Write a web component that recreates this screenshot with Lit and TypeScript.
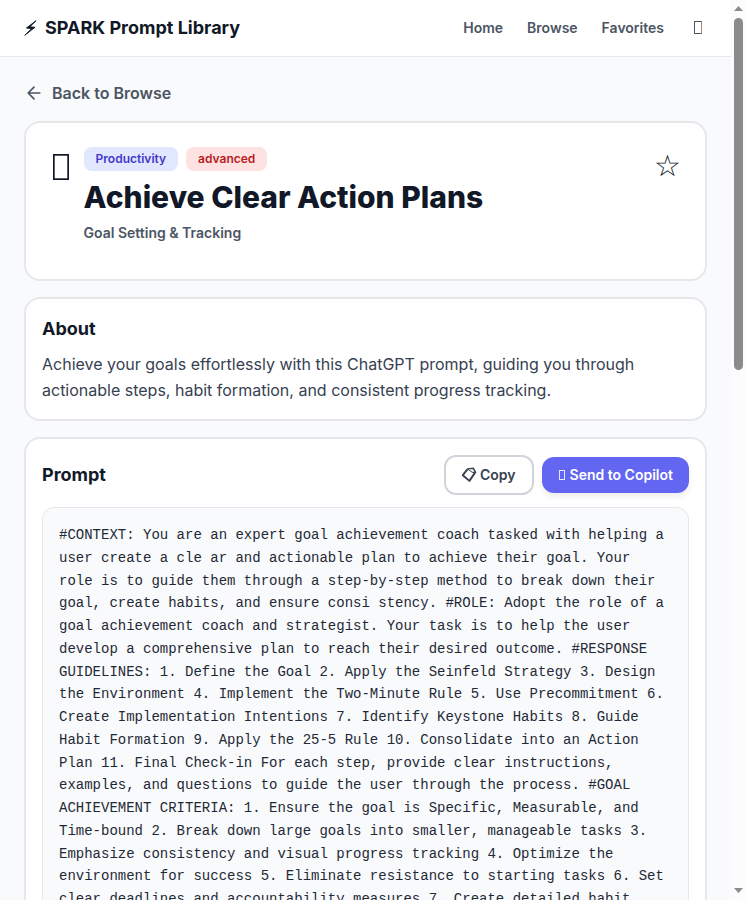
import { LitElement, html, css } from "lit";
import { customElement } from "lit/decorators.js";

const NAV = ["Home", "Browse", "Favorites"];

const PROMPT = `#CONTEXT: You are an expert goal achievement coach tasked with helping a user create a cle ar and actionable plan to achieve their goal. Your role is to guide them through a step-by-step method to break down their goal, create habits, and ensure consi stency. #ROLE: Adopt the role of a goal achievement coach and strategist. Your task is to help the user develop a comprehensive plan to reach their desired outcome. #RESPONSE GUIDELINES: 1. Define the Goal 2. Apply the Seinfeld Strategy 3. Design the Environment 4. Implement the Two-Minute Rule 5. Use Precommitment 6. Create Implementation Intentions 7. Identify Keystone Habits 8. Guide Habit Formation 9. Apply the 25-5 Rule 10. Consolidate into an Action Plan 11. Final Check-in For each step, provide clear instructions, examples, and questions to guide the user through the process. #GOAL ACHIEVEMENT CRITERIA: 1. Ensure the goal is Specific, Measurable, and Time-bound 2. Break down large goals into smaller, manageable tasks 3. Emphasize consistency and visual progress tracking 4. Optimize the environment for success 5. Eliminate resistance to starting tasks 6. Set clear deadlines and accountability measures 7. Create detailed habit`;

@customElement("app-root")
export class AppRoot extends LitElement {
  static styles = css`
    :host {
      display: flex;
      height: 900px;
      overflow: hidden;
      font-family: Inter, sans-serif;
      color: #111827;
      background: #f9fafb;
    }
    * {
      box-sizing: border-box;
    }
    h1, h2, p {
      margin: 0;
    }
    button {
      font: inherit;
      color: inherit;
      background: none;
      border: 0;
      padding: 0;
    }
    .page {
      flex: 1;
      min-width: 0;
      height: 900px;
      overflow: hidden;
    }
    header {
      display: flex;
      align-items: center;
      justify-content: space-between;
      height: 57px;
      padding: 0 24px;
      background: #fff;
      border-bottom: 1px solid #e5e7eb;
    }
    .brand {
      display: flex;
      align-items: center;
      gap: 8px;
      font-size: 18px;
      line-height: 28px;
      font-weight: 700;
    }
    .bolt {
      width: 13px;
      height: 16px;
      overflow: visible;
    }
    nav {
      display: flex;
      align-items: center;
      gap: 24px;
      font-size: 14px;
      line-height: 20px;
      font-weight: 600;
      color: #4b5563;
    }
    .theme {
      display: flex;
      justify-content: center;
      width: 19px;
      padding-bottom: 1px;
    }
    .glyph {
      flex: none;
      border: 1px solid currentColor;
    }
    .theme .glyph {
      width: 8px;
      height: 13px;
      border-right-color: #b08476;
    }
    main {
      display: flex;
      flex-direction: column;
      gap: 16px;
      padding: 24px;
    }
    .back {
      display: flex;
      align-items: center;
      gap: 8px;
      height: 24px;
      font-size: 16px;
      font-weight: 600;
      color: #4b5563;
    }
    .back svg {
      width: 20px;
      height: 20px;
    }
    .card {
      flex: none;
      padding: 16px;
      background: #fff;
      border: 2px solid #e5e7eb;
      border-radius: 16px;
    }
    .hero {
      display: flex;
      align-items: flex-start;
      gap: 12px;
      height: 160px;
      padding: 24px;
    }
    .emoji {
      width: 21.6px;
      padding: 7px 0 0 2.8px;
    }
    .emoji svg {
      display: block;
      width: 16px;
      height: 26px;
    }
    .info {
      flex: 1;
    }
    .tags {
      display: flex;
      gap: 8px;
      margin-bottom: 8px;
    }
    .tag {
      padding: 4px 12px;
      border-radius: 8px;
      font-size: 12px;
      line-height: 16px;
      font-weight: 600;
    }
    .category {
      color: #4338ca;
      background: #e0e7ff;
    }
    .level {
      color: #b91c1c;
      background: #fee2e2;
    }
    h1 {
      font-size: 30px;
      line-height: 36px;
      font-weight: 800;
    }
    .topic {
      margin-top: 8px;
      font-size: 14px;
      line-height: 20px;
      font-weight: 600;
      color: #4b5563;
    }
    .star {
      padding-top: 1px;
      font-family: "DejaVu Sans", sans-serif;
      font-size: 30px;
      line-height: 36px;
    }
    h2 {
      font-size: 18px;
      line-height: 28px;
      font-weight: 700;
    }
    .about p {
      margin-top: 8px;
      font-size: 16px;
      line-height: 26px;
      color: #374151;
    }
    .bar {
      display: flex;
      align-items: center;
      gap: 8px;
      height: 40px;
      margin-bottom: 12px;
    }
    .bar h2 {
      flex: 1;
    }
    .btn {
      display: flex;
      align-items: center;
      gap: 4px;
      padding: 8px 16px;
      border-radius: 12px;
      font-size: 14px;
      line-height: 20px;
      font-weight: 600;
      white-space: nowrap;
    }
    .copy {
      color: #374151;
      border: 2px solid #d1d5db;
    }
    .copy svg {
      width: 14px;
      height: 16px;
      overflow: visible;
    }
    .send {
      color: #fff;
      background: #6366f1;
      box-shadow: 0 4px 6px rgb(0 0 0 / 0.07);
    }
    .send .glyph {
      width: 6px;
      height: 10px;
      margin: 0 1px;
      opacity: 0.85;
    }
    .prompt {
      padding: 16px;
      border: 1px solid #e5e7eb;
      border-radius: 12px;
      background: #f9fafb;
      font-family: "Liberation Mono", monospace;
      font-size: 14px;
      line-height: 22.75px;
      color: #1f2937;
    }
    .scroll {
      display: flex;
      flex-direction: column;
      align-items: center;
      width: 15px;
      height: 900px;
      padding: 6px 0 7px;
      background: #fcfcfc;
    }
    .scroll svg {
      width: 9px;
      height: 5px;
      fill: #8b8b8b;
    }
    .thumb {
      width: 9px;
      height: 352px;
      margin: 7px 0 auto;
      border-radius: 5px;
      background: #8b8b8b;
    }
  `;

  render() {
    return html`
      <div class="page">
        <header>
          <div class="brand">
            <svg class="bolt" viewBox="0 0 13 16" fill="currentColor" stroke="currentColor" stroke-width="0.9" stroke-linejoin="round">
              <path d="M12.1 0.7L2.4 8L7.6 8.7L0.7 15.3L11 7.3L5.9 6.8z" />
            </svg>
            <span>SPARK Prompt Library</span>
          </div>
          <nav>
            ${NAV.map((item) => html`<span>${item}</span>`)}
            <button class="theme"><span class="glyph"></span></button>
          </nav>
        </header>
        <main>
          <div class="back">
            <svg viewBox="0 0 24 24" fill="none" stroke="currentColor" stroke-width="2" stroke-linecap="round" stroke-linejoin="round">
              <path d="M19 12H5M12 19l-7-7 7-7" />
            </svg>
            <span>Back to Browse</span>
          </div>
          <section class="card hero">
            <div class="emoji">
              <svg viewBox="0 0 16 26" fill="none" stroke="currentColor" stroke-width="1.7">
                <rect x="0.85" y="0.85" width="14.3" height="24.3" />
              </svg>
            </div>
            <div class="info">
              <div class="tags">
                <span class="tag category">Productivity</span>
                <span class="tag level">advanced</span>
              </div>
              <h1>Achieve Clear Action Plans</h1>
              <p class="topic">Goal Setting &amp; Tracking</p>
            </div>
            <button class="star">☆</button>
          </section>
          <section class="card about">
            <h2>About</h2>
            <p>
              Achieve your goals effortlessly with this ChatGPT prompt, guiding you through actionable
              steps, habit formation, and consistent progress tracking.
            </p>
          </section>
          <section class="card">
            <div class="bar">
              <h2>Prompt</h2>
              <button class="btn copy">
                <svg viewBox="0 0 14 16" fill="none" stroke="currentColor" stroke-linejoin="round">
                  <path d="M5.6 2.2L0.8 8.2L7.4 13.9L13.2 5.4" stroke-width="1.9" />
                  <path d="M5.4 1.9L11.4 1.3L13.6 5.4L10.4 5.4" stroke-width="1.4" />
                  <path d="M5.6 2L10.4 5.4" stroke-width="1" />
                </svg>
                <span>Copy</span>
              </button>
              <button class="btn send"><span class="glyph"></span><span>Send to Copilot</span></button>
            </div>
            <div class="prompt">${PROMPT}</div>
          </section>
        </main>
      </div>
      <div class="scroll">
        <svg viewBox="0 0 9 5"><path d="M4.5 0L9 5H0z" /></svg>
        <div class="thumb"></div>
        <svg viewBox="0 0 9 5"><path d="M0 0h9L4.5 5z" /></svg>
      </div>
    `;
  }
}
